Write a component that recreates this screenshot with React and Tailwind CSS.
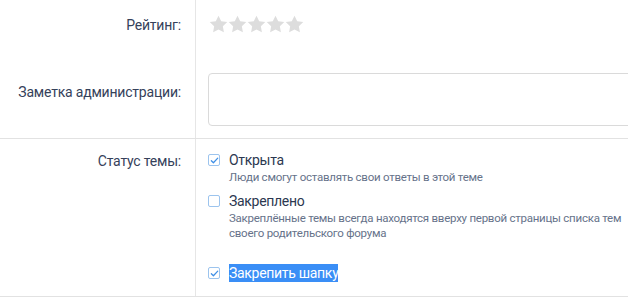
import React from "react";

const Star = () => (
  <svg width="19" height="19" viewBox="0 0 24 24" className="block">
    <path d="M12 .8l3.4 7 7.7 1.1-5.6 5.4 1.3 7.6L12 18.3l-6.8 3.6 1.3-7.6L.9 8.9l7.7-1.1z" fill="#dddddd" />
  </svg>
);

const Check = ({ checked }) => (
  <span className="mt-[4px] flex h-[12px] w-[12px] shrink-0 items-center justify-center rounded-[2px] border border-[#9cc4ee] bg-white">
    {checked && (
      <svg width="9" height="9" viewBox="0 0 10 10" className="block">
        <path d="M1.5 5.2l2.3 2.3L8.6 2.4" fill="none" stroke="#3f8fe6" strokeWidth="1.4" strokeLinecap="round" strokeLinejoin="round" />
      </svg>
    )}
  </span>
);

export default function App() {
  const font = { fontFamily: "Roboto, 'Noto Sans', sans-serif" };
  return (
    <div className="w-[628px] h-[300px] overflow-hidden bg-white" style={font}>
      <div className="w-[680px] border-b border-[#e2e2e2]">
        {/* Rating row */}
        <div className="flex h-[62px]">
          <div className="w-[196px] shrink-0 border-r border-[#e6e6e6] pr-[14px] pt-[15px] text-right text-[14px] leading-[20px] tracking-[-0.2px] text-[#35415a]">
            Рейтинг:
          </div>
          <div className="flex pl-[13px] pt-[15px]">
            <Star /><Star /><Star /><Star /><Star />
          </div>
        </div>
        {/* Note row */}
        <div className="flex border-b border-[#e2e2e2]">
          <div className="w-[196px] shrink-0 border-r border-[#e6e6e6] pr-[14px] pt-[20px] text-right text-[14px] leading-[20px] tracking-[-0.2px] text-[#35415a]">
            Заметка администрации:
          </div>
          <div className="flex-1 pl-[12px] pr-[20px] pt-[11px] pb-[12px]">
            <div className="h-[53px] w-full rounded-[4px] border border-[#dadada] bg-white" />
          </div>
        </div>
        {/* Status row */}
        <div className="flex">
          <div className="w-[196px] shrink-0 border-r border-[#e6e6e6] pr-[14px] pt-[12px] text-right text-[14px] leading-[20px] tracking-[-0.2px] text-[#35415a]">
            Статус темы:
          </div>
          <div className="flex flex-col pl-[12px] pt-[11px] pb-[13px]">
            <div className="flex gap-[9px]">
              <Check checked />
              <div>
                <div className="text-[14px] leading-[20px] tracking-[-0.3px] text-[#2c3850]">Открыта</div>
                <div className="text-[11.5px] leading-[15px] tracking-[-0.25px] text-[#66728a]">
                  Люди смогут оставлять свои ответы в этой теме
                </div>
              </div>
            </div>
            <div className="mt-[6px] flex gap-[9px]">
              <Check />
              <div>
                <div className="text-[14px] leading-[20px] tracking-[-0.3px] text-[#2c3850]">Закреплено</div>
                <div className="whitespace-nowrap text-[11.5px] leading-[15px] tracking-[-0.25px] text-[#66728a]">
                  Закреплённые темы всегда находятся вверху первой страницы списка тем
                  <br />
                  своего родительского форума
                </div>
              </div>
            </div>
            <div className="mt-[22px] flex gap-[9px]">
              <Check checked />
              <div className="text-[14px] leading-[20px] tracking-[-0.3px]">
                <span className="bg-[#3a8ef6] py-[1px] text-white">Закрепить шапку</span>
              </div>
            </div>
          </div>
        </div>
      </div>
    </div>
  );
}
